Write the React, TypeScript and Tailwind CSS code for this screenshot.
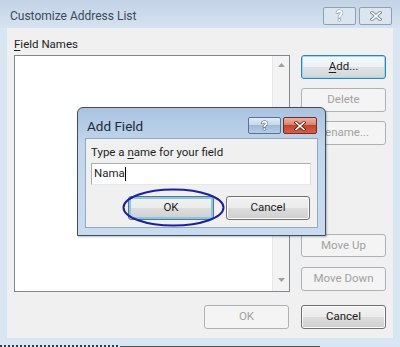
import React from "react";

type BtnProps = {
  children: React.ReactNode;
  kind?: "normal" | "disabled" | "default";
  className?: string;
};

function Btn({ children, kind = "normal", className = "" }: BtnProps) {
  const base =
    "flex items-center justify-center rounded-[3px] border leading-none text-[11.5px]";
  const styles =
    kind === "disabled"
      ? "border-[#adb2b5] bg-[#f4f4f4] text-[#a2a2a2]"
      : kind === "default"
      ? "border-[#3c7fb1] text-[#1e1e1e] bg-[linear-gradient(to_bottom,#f6f9fb_0%,#eef1f3_50%,#e0e3e5_50%,#d3d6d8_100%)] shadow-[inset_0_0_0_1px_#8fdcf8]"
      : "border-[#707070] text-[#1e1e1e] bg-[linear-gradient(to_bottom,#f2f2f2_0%,#ebebeb_50%,#dddddd_50%,#cfcfcf_100%)] shadow-[inset_0_0_0_1px_#fbfbfb]";
  return <div className={`${base} ${styles} ${className}`}>{children}</div>;
}

function XGlyph({ outline = "#7b8797", fill = "#ffffff", sw = 3.2 }) {
  return (
    <svg width={12} height={10} viewBox="0 0 12 10">
      <path d="M2 1.5 L10 8.5 M10 1.5 L2 8.5" stroke={outline} strokeWidth={sw} strokeLinecap="square" fill="none" />
      <path d="M2 1.5 L10 8.5 M10 1.5 L2 8.5" stroke={fill} strokeWidth={sw - 1.6} strokeLinecap="square" fill="none" />
    </svg>
  );
}

function Arrow({ up }: { up?: boolean }) {
  return (
    <svg width="7" height="4" viewBox="0 0 7 4">
      <path d={up ? "M0 4 L3.5 0 L7 4 Z" : "M0 0 L7 0 L3.5 4 Z"} fill="#a0a0a0" />
    </svg>
  );
}

export default function App() {
  return (
    <div className="relative w-[400px] h-[347px] overflow-hidden bg-[#d8e5f2] font-['Roboto',sans-serif] text-[11.5px] text-black">
      {/* Title bar */}
      <div className="h-[28px] flex items-start justify-between pl-[10px] pr-[8px] bg-[linear-gradient(to_bottom,#c3d3e6,#d6e2ef)]">
        <span className="mt-[6px] text-[12px] leading-[20px] text-[#3b4a5c]">Customize Address List</span>
        <div className="flex gap-[3px] mt-[7px]">
          <div className="w-[33px] h-[18px] rounded-[2px] border border-[#8fa0b5] bg-[#dbe5f0] flex items-center justify-center">
            <span className="text-[14px] font-bold leading-none text-white [-webkit-text-stroke:1px_#7b8797] [paint-order:stroke_fill]">?</span>
          </div>
          <div className="w-[33px] h-[18px] rounded-[2px] border border-[#8fa0b5] bg-[#dbe5f0] flex items-center justify-center">
            <XGlyph />
          </div>
        </div>
      </div>

      {/* Body */}
      <div className="mx-[7px] h-[310px] bg-[#f0f0f0] flex flex-col pl-[7px] pr-[7px]">
        <div className="pt-[8px] leading-[16px] text-[#1e1e1e]">
          <span className="underline underline-offset-2">F</span>ield Names
        </div>
        <div className="mt-[3px] flex h-[237px]">
          <div className="w-[276px] border border-[#828790] bg-white flex justify-end">
            <div className="w-[17px] border-l border-[#e6e6e6] bg-[#f3f3f3] flex flex-col justify-between items-center pt-[7px] pb-[9px]">
              <Arrow up />
              <Arrow />
            </div>
          </div>
          <div className="ml-[11px] w-[85px] flex flex-col justify-between pb-[1px]">
            <div className="flex flex-col gap-[9px]">
              <Btn kind="default" className="h-[24px]">
                <span><span className="underline underline-offset-2">A</span>dd...</span>
              </Btn>
              <Btn kind="disabled" className="h-[24px]">Delete</Btn>
              <Btn kind="disabled" className="h-[24px]">Rename...</Btn>
            </div>
            <div className="flex flex-col gap-[10px]">
              <Btn kind="disabled" className="h-[23px]">Move Up</Btn>
              <Btn kind="disabled" className="h-[24px]">Move Down</Btn>
            </div>
          </div>
        </div>
        <div className="mt-[13px] flex justify-end gap-[12px]">
          <Btn kind="disabled" className="w-[85px] h-[24px]">OK</Btn>
          <Btn className="w-[85px] h-[24px]">Cancel</Btn>
        </div>
      </div>

      {/* bottom band remnants */}
      <div className="absolute left-0 bottom-0 w-[400px] h-[2px] flex">
        <div className="w-[120px] h-[2px] bg-[repeating-linear-gradient(90deg,#3a3a3a_0_2px,transparent_2px_4px)]" />
        <div className="w-[200px] h-[1px] mt-[1px] bg-[#555]" />
      </div>

      {/* Add Field dialog */}
      <div className="absolute left-[77px] top-[107px] w-[249px] h-[129px] rounded-t-[6px] border border-[#3d4d62] bg-[linear-gradient(to_bottom,#a9c3e0,#c3d7ec_30%,#c9dcef)] flex flex-col shadow-[1px_1px_2px_rgba(0,0,0,0.25)]">
        <div className="h-[30px] flex items-start justify-between pl-[9px] pr-[8px]">
          <span className="mt-[9px] text-[13.5px] leading-[18px] text-[#1e2b3a]">Add Field</span>
          <div className="flex gap-[2px] mt-[9px]">
            <div className="w-[33px] h-[17px] rounded-[2px] border border-[#5a7393] bg-[linear-gradient(to_bottom,#e3edf7_0%,#c5d7ea_45%,#9fbbd9_50%,#b5cde6_100%)] flex items-center justify-center">
              <span className="text-[13px] font-bold leading-none text-white [-webkit-text-stroke:1px_#3d5470] [paint-order:stroke_fill]">?</span>
            </div>
            <div className="w-[34px] h-[17px] rounded-[2px] border border-[#7a2a1e] bg-[linear-gradient(to_bottom,#eab4a6_0%,#d9826d_45%,#c4442c_50%,#d4604a_100%)] flex items-center justify-center">
              <XGlyph outline="#6b2015" />
            </div>
          </div>
        </div>
        <div className="mx-[7px] h-[90px] bg-[#f0f0f0] border border-[#93a9c3] flex flex-col pl-[5px] pr-[7px]">
          <div className="pt-[5px] leading-[16px] text-[#1e1e1e]">
            Type a <span className="underline underline-offset-2">n</span>ame for your field
          </div>
          <div className="mt-[3px] w-[220px] h-[22px] bg-white border border-[#abadb3] border-b-[#e3e9ef] border-r-[#dbdfe6] flex items-center pl-[2px] text-[#1e1e1e]">
            Nama<span className="w-[1px] h-[14px] bg-black" />
          </div>
          <div className="mt-[11px] flex justify-end gap-[12px]">
            <Btn className="w-[86px] h-[24px] border-[#3c7fb1] shadow-[inset_0_0_0_2px_#7ec9ee]">OK</Btn>
            <Btn className="w-[84px] h-[24px]">Cancel</Btn>
          </div>
        </div>
      </div>

      {/* annotation ellipse */}
      <svg className="absolute left-[122px] top-[188px]" width="103" height="39" viewBox="0 0 103 39">
        <ellipse cx="51.5" cy="19.5" rx="50" ry="18" fill="none" stroke="#1a1fa3" strokeWidth="2" />
      </svg>
    </div>
  );
}
